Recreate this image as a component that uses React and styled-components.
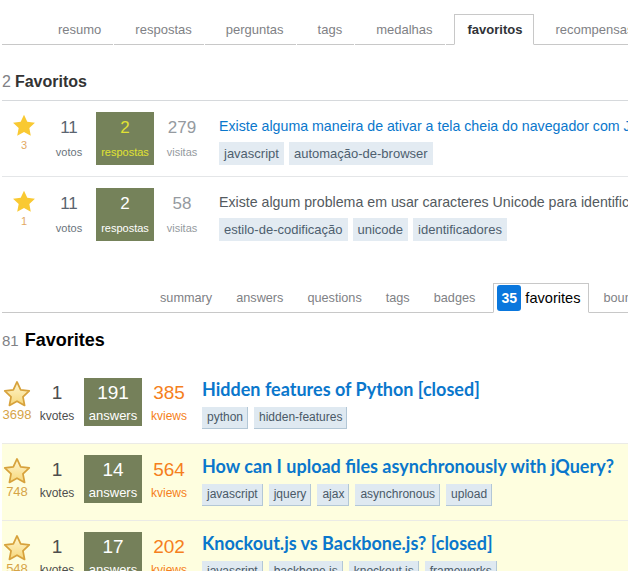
import React from "react";
import styled, { createGlobalStyle } from "styled-components";

const GlobalStyle = createGlobalStyle`
  html, body { margin: 0; padding: 0; background: #fff; }
  body {
    font-family: "Liberation Sans", Arial, sans-serif;
    width: 628px;
    height: 571px;
    overflow: hidden;
  }
  a { text-decoration: none; }
`;

const Page = styled.div`
  width: 628px;
  height: 571px;
  overflow: hidden;
  padding-left: 2px;
  box-sizing: border-box;
`;

/* ---------- tabs ---------- */
const TabBar = styled.nav`
  display: flex;
  align-items: flex-end;
  white-space: nowrap;
  margin-top: ${(p) => p.$top}px;
  padding-left: ${(p) => p.$lead}px;
  border-bottom: 1px solid #c8c8c8;
`;

const PtTab = styled.a`
  flex: none;
  position: relative;
  font-size: 13px;
  line-height: 29px;
  color: #808185;
  padding: ${(p) => (p.$active ? "0 11px 0 13px" : "0 12px 0 21px")};
  margin: ${(p) => (p.$active ? "0 0 -1px 8px" : "0 1px 0 0")};
  font-weight: ${(p) => (p.$active ? "bold" : "normal")};
  ${(p) =>
    p.$active
      ? `
    color: #2f3337;
    background: #fff;
    border: 1px solid #c8c8c8;
    border-bottom-color: #fff;
  `
      : `
    &::after {
      content: "";
      position: absolute;
      right: -1px;
      bottom: -1px;
      width: 1px;
      height: 1px;
      background: #fff;
    }
  `}
`;

const EnTab = styled.a`
  flex: none;
  display: flex;
  align-items: center;
  font-size: 12.7px;
  line-height: 28px;
  height: 28px;
  color: #808185;
  padding: 0 12px;
  ${(p) =>
    p.$active &&
    `
    margin: 0 3px -1px 6px;
    padding: 0 7px 0 3px;
    background: #fff;
    border: 1px solid #c8c8c8;
    border-bottom-color: #fff;
    color: #000;
    font-size: 14.6px;
  `}
`;

const Badge = styled.span`
  display: inline-flex;
  align-items: center;
  justify-content: center;
  width: 24px;
  height: 26px;
  margin-right: 4px;
  border-radius: 3px;
  background: #0a77dd;
  color: #fff;
  font-weight: bold;
  font-size: 14px;
`;

/* ---------- headings ---------- */
const Heading = styled.h2`
  margin: ${(p) => p.$mt}px 0 0;
  padding-bottom: ${(p) => p.$pb}px;
  border-bottom: ${(p) => (p.$line ? "1px solid #d6d9dc" : "none")};
  font-size: ${(p) => p.$size}px;
  line-height: ${(p) => p.$lh}px;
  font-weight: bold;
  color: ${(p) => p.$color};
`;

const Count = styled.span`
  font-weight: normal;
  color: #808185;
  font-size: ${(p) => p.$size}px;
  margin-right: ${(p) => p.$gap}px;
`;

/* ---------- stars ---------- */
const STAR = "M12 1.6l3.15 6.75 7.35.95-5.4 5.1 1.4 7.3L12 18.1l-6.5 3.6 1.4-7.3-5.4-5.1 7.35-.95z";

const SolidStar = () => (
  <svg width="26" height="24" viewBox="0 0 24 23" aria-hidden="true">
    <path d={STAR} fill="#f9c932" />
  </svg>
);

const OutlineStar = () => (
  <svg width="28" height="27" viewBox="0 0 24 23" aria-hidden="true">
    <defs>
      <linearGradient id="sg" x1="0" y1="0" x2="0" y2="1">
        <stop offset="0" stopColor="#fff6cf" />
        <stop offset="1" stopColor="#f6d77a" />
      </linearGradient>
    </defs>
    <path d={STAR} fill="url(#sg)" stroke="#d7a23c" strokeWidth="1.5" strokeLinejoin="round" />
  </svg>
);

/* ---------- pt rows ---------- */
const PtList = styled.div``;

const PtRow = styled.div`
  display: flex;
  padding: 11px 0;
  border-bottom: 1px solid #e4e6e8;
  &:last-child { border-bottom: none; }
`;

const PtFav = styled.div`
  flex: none;
  width: 44px;
  display: flex;
  flex-direction: column;
  align-items: center;
  padding-top: 1px;
  svg { display: block; }
`;

const PtFavCount = styled.div`
  font-size: 11px;
  line-height: 14px;
  margin-top: 1px;
  color: #e3a963;
`;

const PtStat = styled.div`
  flex: none;
  width: ${(p) => p.$w}px;
  margin-right: ${(p) => p.$mr || 0}px;
  display: flex;
  flex-direction: column;
  align-items: center;
  padding-top: 5px;
  color: ${(p) => p.$color};
`;

const PtAnswers = styled(PtStat)`
  height: 53px;
  box-sizing: border-box;
  background: #75825a;
`;

const PtNum = styled.div`
  font-size: 17px;
  line-height: 22px;
`;

const PtLabel = styled.div`
  font-size: 11px;
  line-height: 18px;
  margin-top: 4px;
  color: ${(p) => p.$color || "inherit"};
`;

const PtSummary = styled.div`
  flex: 1;
  min-width: 0;
  margin-left: 9px;
  padding-top: 4px;
`;

const PtTitle = styled.a`
  display: block;
  white-space: nowrap;
  font-size: 14.2px;
  line-height: 20px;
  color: ${(p) => (p.$visited ? "#535a60" : "#0a77cc")};
`;

const TagList = styled.div`
  display: flex;
  gap: ${(p) => p.$gap}px;
  margin-top: ${(p) => p.$mt}px;
  white-space: nowrap;
`;

const PtTag = styled.a`
  flex: none;
  height: 23px;
  line-height: 23px;
  padding: 0 5px;
  font-size: 13px;
  color: #4e5f6f;
  background: #e3ebf2;
`;

/* ---------- en rows ---------- */
const EnList = styled.div`
  margin-top: 15px;
`;

const EnRow = styled.div`
  display: flex;
  padding: 11px 0 14px;
  background: ${(p) => (p.$hl ? "#fefedf" : "#fff")};
  border-bottom: 1px solid #ebebe6;
`;

const EnFav = styled.div`
  flex: none;
  width: 30px;
  display: flex;
  flex-direction: column;
  align-items: center;
  padding-top: 2px;
  svg { display: block; }
`;

const EnFavCount = styled.div`
  font-size: 13px;
  line-height: 16px;
  color: #d6a447;
`;

const EnStat = styled.div`
  flex: none;
  width: ${(p) => p.$w}px;
  margin-right: ${(p) => p.$mr || 0}px;
  display: flex;
  flex-direction: column;
  align-items: center;
  padding-top: 4px;
  color: ${(p) => p.$color};
`;

const EnAnswers = styled(EnStat)`
  height: 48px;
  box-sizing: border-box;
  background: #75805a;
`;

const EnNum = styled.div`
  font-size: 19px;
  line-height: 22px;
`;

const EnLabel = styled.div`
  font-size: ${(p) => p.$size || 12}px;
  line-height: 16px;
  margin-top: 4px;
`;

const EnSummary = styled.div`
  flex: 1;
  min-width: 0;
  margin-left: 6px;
`;

const EnTitle = styled.a`
  display: block;
  white-space: nowrap;
  font-family: Lato, "Liberation Sans", sans-serif;
  font-weight: bold;
  font-size: 18px;
  line-height: 22px;
  color: #0a77cc;
`;

const EnTag = styled.a`
  flex: none;
  height: 21px;
  line-height: 21px;
  padding: 0 4px 0 5px;
  font-size: 12px;
  color: #4a5967;
  background: #dfe9f1;
  border-right: 1px solid #b3c7d6;
  border-bottom: 1px solid #b3c7d6;
`;

/* ---------- data ---------- */
const ptTabs = ["resumo", "respostas", "perguntas", "tags", "medalhas", "favoritos", "recompensas"];
const ptRows = [
  {
    fav: 3, votes: 11, answers: 2, accepted: true, views: 279,
    title: "Existe alguma maneira de ativar a tela cheia do navegador com JavaScript?",
    tags: ["javascript", "automação-de-browser"],
  },
  {
    fav: 1, votes: 11, answers: 2, accepted: false, views: 58, visited: true,
    title: "Existe algum problema em usar caracteres Unicode para identificadores?",
    tags: ["estilo-de-codificação", "unicode", "identificadores"],
  },
];

const enTabs = ["summary", "answers", "questions", "tags", "badges", "favorites", "bounties"];
const enRows = [
  {
    fav: 3698, votes: 1, answers: 191, views: 385,
    title: "Hidden features of Python [closed]",
    tags: ["python", "hidden-features"],
  },
  {
    fav: 748, votes: 1, answers: 14, views: 564, hl: true,
    title: "How can I upload files asynchronously with jQuery?",
    tags: ["javascript", "jquery", "ajax", "asynchronous", "upload"],
  },
  {
    fav: 548, votes: 1, answers: 17, views: 202, hl: true,
    title: "Knockout.js vs Backbone.js? [closed]",
    tags: ["javascript", "backbone.js", "knockout.js", "frameworks"],
  },
];

export default function App() {
  return (
    <Page>
      <GlobalStyle />

      <TabBar $top={14} $lead={35}>
        {ptTabs.map((t) => (
          <PtTab key={t} $active={t === "favoritos"}>{t}</PtTab>
        ))}
      </TabBar>

      <Heading $mt={27} $pb={8} $line $size={16} $lh={20} $color="#333">
        <Count $size={16} $gap={4}>2</Count>Favoritos
      </Heading>

      <PtList>
        {ptRows.map((r, i) => (
          <PtRow key={i}>
            <PtFav>
              <SolidStar />
              <PtFavCount>{r.fav}</PtFavCount>
            </PtFav>
            <PtStat $w={46} $mr={4} $color="#5b6470">
              <PtNum>{r.votes}</PtNum>
              <PtLabel $color="#6a737c">votos</PtLabel>
            </PtStat>
            <PtAnswers $w={58} $color={r.accepted ? "#e0e234" : "#fff"}>
              <PtNum>{r.answers}</PtNum>
              <PtLabel>respostas</PtLabel>
            </PtAnswers>
            <PtStat $w={56} $color="#959aa0">
              <PtNum>{r.views}</PtNum>
              <PtLabel>visitas</PtLabel>
            </PtStat>
            <PtSummary>
              <PtTitle $visited={r.visited}>{r.title}</PtTitle>
              <TagList $gap={5} $mt={6}>
                {r.tags.map((t) => (
                  <PtTag key={t}>{t}</PtTag>
                ))}
              </TagList>
            </PtSummary>
          </PtRow>
        ))}
      </PtList>

      <TabBar $top={31} $lead={146}>
        {enTabs.map((t) =>
          t === "favorites" ? (
            <EnTab key={t} $active>
              <Badge>35</Badge>
              {t}
            </EnTab>
          ) : (
            <EnTab key={t}>{t}</EnTab>
          )
        )}
      </TabBar>

      <Heading $mt={16} $pb={0} $size={18} $lh={22} $color="#000">
        <Count $size={15} $gap={6}>81</Count>Favorites
      </Heading>

      <EnList>
        {enRows.map((r, i) => (
          <EnRow key={i} $hl={r.hl}>
            <EnFav>
              <OutlineStar />
              <EnFavCount>{r.fav}</EnFavCount>
            </EnFav>
            <EnStat $w={50} $mr={2} $color="#4e4e4e">
              <EnNum>{r.votes}</EnNum>
              <EnLabel>kvotes</EnLabel>
            </EnStat>
            <EnAnswers $w={58} $color="#fff">
              <EnNum>{r.answers}</EnNum>
              <EnLabel $size={13}>answers</EnLabel>
            </EnAnswers>
            <EnStat $w={54} $color="#f57f20">
              <EnNum>{r.views}</EnNum>
              <EnLabel>kviews</EnLabel>
            </EnStat>
            <EnSummary>
              <EnTitle>{r.title}</EnTitle>
              <TagList $gap={6} $mt={7}>
                {r.tags.map((t) => (
                  <EnTag key={t}>{t}</EnTag>
                ))}
              </TagList>
            </EnSummary>
          </EnRow>
        ))}
      </EnList>
    </Page>
  );
}
